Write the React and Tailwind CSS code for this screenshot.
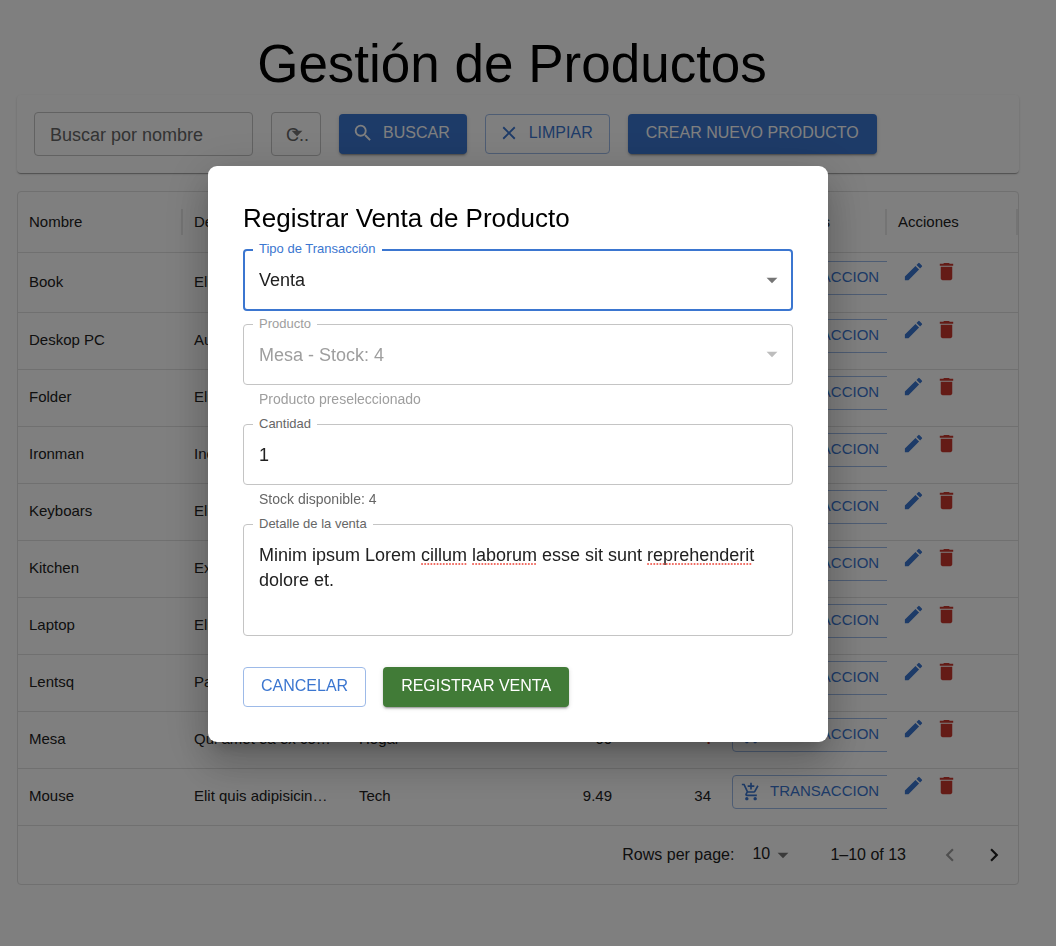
import React from "react";
import {
  MdAddShoppingCart,
  MdArrowDropDown,
  MdClear,
  MdDelete,
  MdEdit,
  MdKeyboardArrowLeft,
  MdKeyboardArrowRight,
  MdSearch,
} from "react-icons/md";

const products = [
  { name: "Book", description: "Elit quis", category: "Hogar", price: "12", stock: 20 },
  { name: "Deskop PC", description: "Aute", category: "Tech", price: "900", stock: 12 },
  { name: "Folder", description: "Elit quis", category: "Hogar", price: "5", stock: 40 },
  { name: "Ironman", description: "Incididunt", category: "Hogar", price: "30", stock: 15 },
  { name: "Keyboars", description: "Elit quis", category: "Tech", price: "25", stock: 18 },
  { name: "Kitchen", description: "Excepteur", category: "Hogar", price: "80", stock: 10 },
  { name: "Laptop", description: "Elit quis", category: "Tech", price: "700", stock: 11 },
  { name: "Lentsq", description: "Pariatur", category: "Hogar", price: "15", stock: 22 },
  { name: "Mesa", description: "Qui amet ea ex co…", category: "Hogar", price: "60", stock: 4 },
  { name: "Mouse", description: "Elit quis adipisicin…", category: "Tech", price: "9.49", stock: 34 },
];

const buttonBase =
  "flex h-10 items-center justify-center rounded-[4px] pb-[2px] text-base whitespace-nowrap";
const solidShadow =
  "shadow-[0_3px_1px_-2px_rgba(0,0,0,0.2),0_2px_2px_0_rgba(0,0,0,0.14),0_1px_5px_0_rgba(0,0,0,0.12)]";

function HeaderCell({ children, right }) {
  return (
    <th scope="col" className="p-0 font-normal">
      <div className="flex h-[26px] items-center border-r-2 border-[#e8e8e8]">
        <span className={right ? "grow px-[11px] text-right" : "grow px-[11px] text-left"}>
          {children}
        </span>
      </div>
    </th>
  );
}

function SearchBar() {
  return (
    <form
      className="flex items-center gap-[18px] rounded-[4px] bg-white p-[17px] shadow-[0_2px_1px_-1px_rgba(0,0,0,0.2),0_1px_1px_0_rgba(0,0,0,0.14),0_1px_3px_0_rgba(0,0,0,0.12)]"
      onSubmit={(e) => e.preventDefault()}
    >
      <input
        type="text"
        aria-label="Buscar por nombre"
        placeholder="Buscar por nombre"
        className="h-11 w-[219px] rounded-[4px] border border-[#c4c4c4] bg-white px-[15px] pt-[2px] text-[18px] text-[#212121] placeholder:text-[#666666]"
      />
      <div className="relative">
        <select
          aria-label="Categoría"
          className="block h-11 w-[50px] appearance-none rounded-[4px] border border-[#c4c4c4] bg-white pt-[2px] pl-[14px] text-[18px] text-[#666666]"
        >
          <option>C..</option>
        </select>
        <MdArrowDropDown className="pointer-events-none absolute top-[8px] right-[11px] size-[26px] text-[#757575]" />
      </div>
      <button
        type="submit"
        className={`${buttonBase} ${solidShadow} bg-[#3b76d0] pr-[17px] pl-[13px] text-white`}
      >
        <MdSearch className="mr-[9px] size-[22px]" />
        BUSCAR
      </button>
      <button
        type="button"
        className={`${buttonBase} border border-[#9dbae8] pr-4 pl-3 text-[#3b76d0]`}
      >
        <MdClear className="mr-[9px] size-[22px]" />
        LIMPIAR
      </button>
      <button
        type="button"
        className={`${buttonBase} ${solidShadow} bg-[#3b76d0] px-[18px] text-white`}
      >
        CREAR NUEVO PRODUCTO
      </button>
    </form>
  );
}

function ProductRow({ product, first }) {
  const actionPad = first ? "pt-[2px]" : "pt-0";
  return (
    <tr className={first ? "h-[60px] border-b border-[#e0e0e0]" : "h-[57px] border-b border-[#e0e0e0]"}>
      <td className="px-[11px] py-0">{product.name}</td>
      <td className="px-[11px] py-0 whitespace-nowrap">{product.description}</td>
      <td className="px-[11px] py-0">{product.category}</td>
      <td className="px-[11px] py-0 text-right">{product.price}</td>
      <td className={product.stock < 5 ? "px-[11px] py-0 text-right font-bold text-[#c8372d]" : "px-[11px] py-0 text-right"}>
        {product.stock}
      </td>
      <td className={`${actionPad} overflow-hidden pr-0 pb-0 pl-[10px] align-top`}>
        <button
          type="button"
          className="mt-[6px] flex h-[34px] w-[166px] items-center rounded-[4px] border border-[#9dbae8] pl-2 text-[15px] text-[#3b76d0]"
        >
          <MdAddShoppingCart className="mr-[9px] size-5 shrink-0" />
          TRANSACCION
        </button>
      </td>
      <td className={`${actionPad} px-[10px] pb-0 align-top`}>
        <div className="flex">
          <button type="button" aria-label={`Editar ${product.name}`} className="flex size-[33px] items-center justify-center text-[#3b76d0]">
            <MdEdit className="size-[23px]" />
          </button>
          <button type="button" aria-label={`Eliminar ${product.name}`} className="flex size-[33px] items-center justify-center text-[#c8372d]">
            <MdDelete className="size-[23px]" />
          </button>
        </div>
      </td>
    </tr>
  );
}

function ProductTable() {
  return (
    <section className="mt-[18px] rounded-[4px] border border-[#e0e0e0] bg-white text-[15px] text-[#212121]">
      <table className="w-full table-fixed border-collapse">
        <colgroup>
          <col className="w-[165px]" />
          <col className="w-[165px]" />
          <col className="w-[165px]" />
          <col className="w-[110px]" />
          <col className="w-[99px]" />
          <col className="w-[165px]" />
          <col />
        </colgroup>
        <thead>
          <tr className="h-[60px] border-b border-[#e0e0e0]">
            <HeaderCell>Nombre</HeaderCell>
            <HeaderCell>Descripción</HeaderCell>
            <HeaderCell>Categoría</HeaderCell>
            <HeaderCell right>Precio</HeaderCell>
            <HeaderCell right>Stock</HeaderCell>
            <HeaderCell>Transacciones</HeaderCell>
            <HeaderCell>Acciones</HeaderCell>
          </tr>
        </thead>
        <tbody>
          {products.map((product, i) => (
            <ProductRow key={product.name} product={product} first={i === 0} />
          ))}
        </tbody>
      </table>
      <footer className="flex h-[58px] items-center justify-end pr-[2px] text-base">
        <label htmlFor="page-size">Rows per page:</label>
        <div className="relative ml-[18px]">
          <select id="page-size" className="block w-[44px] appearance-none bg-transparent pb-[2px]">
            <option>10</option>
          </select>
          <MdArrowDropDown className="pointer-events-none absolute top-0 right-0 size-[26px] text-[#757575]" />
        </div>
        <span className="ml-[34px]">1–10 of 13</span>
        <div className="ml-[22px] flex">
          <button type="button" disabled aria-label="Página anterior" className="flex size-11 items-center justify-center text-[#9e9e9e]">
            <MdKeyboardArrowLeft className="size-[26px]" />
          </button>
          <button type="button" aria-label="Página siguiente" className="flex size-11 items-center justify-center text-[#212121]">
            <MdKeyboardArrowRight className="size-[26px]" />
          </button>
        </div>
      </footer>
    </section>
  );
}

const floatingLabel = "absolute -top-[9px] left-[10px] bg-white px-[6px] text-[13px] leading-[18px]";

function SaleDialog() {
  return (
    <div className="fixed inset-0 flex items-center justify-center bg-black/50 pr-5 pb-[38px]">
      <form
        role="dialog"
        aria-labelledby="dialog-title"
        className="w-full max-w-[620px] rounded-[9px] bg-white p-[35px] shadow-[0_11px_15px_-7px_rgba(0,0,0,0.2),0_24px_38px_3px_rgba(0,0,0,0.14),0_9px_46px_8px_rgba(0,0,0,0.12)]"
        onSubmit={(e) => e.preventDefault()}
      >
        <h2 id="dialog-title" className="text-[26px] leading-[35px] text-black">
          Registrar Venta de Producto
        </h2>

        <div className="relative mt-[13px]">
          <select
            id="type"
            className="block h-[62px] w-full appearance-none rounded-[4px] border-2 border-[#3b76d0] bg-white px-[14px] text-[18px] text-[#212121] outline-none"
          >
            <option>Venta</option>
          </select>
          <label htmlFor="type" className={`${floatingLabel} text-[#3b76d0]`}>
            Tipo de Transacción
          </label>
          <MdArrowDropDown className="pointer-events-none absolute top-[18px] right-[8px] size-[26px] text-[#757575]" />
        </div>

        <div className="relative mt-[13px]">
          <select
            id="product"
            disabled
            aria-describedby="product-help"
            className="block h-[61px] w-full appearance-none rounded-[4px] border border-[#c4c4c4] bg-white px-[15px] pt-px text-[18px] text-[#9e9e9e] disabled:opacity-100"
          >
            <option>Mesa - Stock: 4</option>
          </select>
          <label htmlFor="product" className={`${floatingLabel} text-[#9e9e9e]`}>
            Producto
          </label>
          <MdArrowDropDown className="pointer-events-none absolute top-[17px] right-[8px] size-[26px] text-[#bdbdbd]" />
        </div>
        <p id="product-help" className="mt-1 px-4 text-sm text-[#9e9e9e]">
          Producto preseleccionado
        </p>

        <div className="relative mt-[15px]">
          <input
            id="quantity"
            type="text"
            inputMode="numeric"
            defaultValue="1"
            aria-describedby="quantity-help"
            className="block h-[61px] w-full rounded-[4px] border border-[#c4c4c4] bg-white px-[15px] pt-px text-[18px] text-[#212121]"
          />
          <label htmlFor="quantity" className={`${floatingLabel} text-[#666666]`}>
            Cantidad
          </label>
        </div>
        <p id="quantity-help" className="mt-1 px-4 text-sm text-[#666666]">
          Stock disponible: 4
        </p>

        <div className="relative mt-[15px]">
          <textarea
            id="detail"
            spellCheck={false}
            defaultValue="Minim ipsum Lorem cillum laborum esse sit sunt reprehenderit dolore et."
            className="block h-[112px] w-full resize-none rounded-[4px] border border-[#c4c4c4] bg-white px-[15px] py-[18px] text-[18px] leading-[25px] text-[#212121]"
          />
          <label htmlFor="detail" className={`${floatingLabel} text-[#666666]`}>
            Detalle de la venta
          </label>
          <svg
            aria-hidden="true"
            className="pointer-events-none absolute top-[38px] left-4 h-1 w-[500px]"
            viewBox="0 0 500 4"
            fill="none"
            stroke="#f0645a"
            strokeWidth="2"
            strokeLinecap="round"
            strokeDasharray="0.1 3"
          >
            <path d="M163 2H207M214 2H277M389 2H494" />
          </svg>
        </div>

        <div className="mt-[31px] flex gap-[17px]">
          <button type="button" className={`${buttonBase} border border-[#9dbae8] px-[17px] text-[#3b76d0]`}>
            CANCELAR
          </button>
          <button type="submit" className={`${buttonBase} ${solidShadow} bg-[#417b37] px-[18px] text-white`}>
            REGISTRAR VENTA
          </button>
        </div>
      </form>
    </div>
  );
}

export default function App() {
  return (
    <div className="min-h-screen bg-white font-['Liberation_Sans',Arial,sans-serif]">
      <main className="pt-[33px] pr-[37px] pb-[61px] pl-[17px]">
        <h1 className="pr-3 text-center text-[53px] leading-[62px] text-black">Gestión de Productos</h1>
        <SearchBar />
        <ProductTable />
      </main>
      <SaleDialog />
    </div>
  );
}
